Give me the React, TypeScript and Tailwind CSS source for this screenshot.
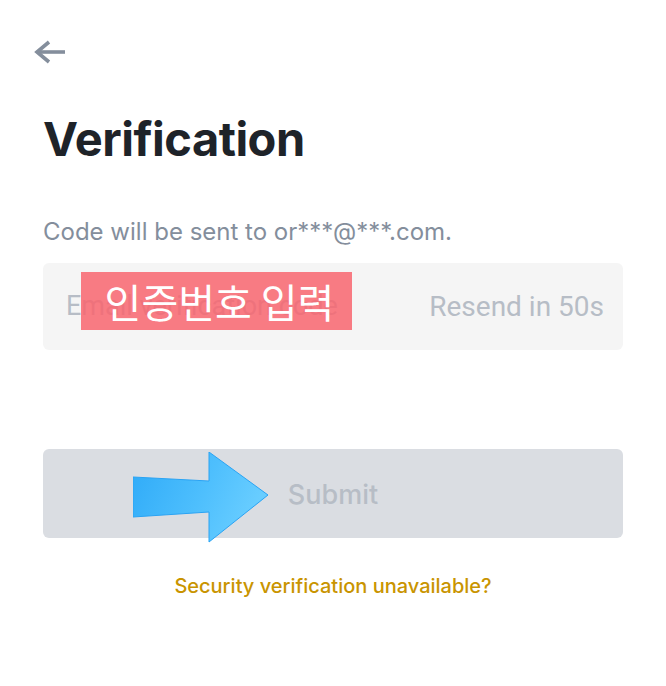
export default function App() {
  return (
    <div className="relative w-[666px] h-[686px] bg-white px-[43px] font-['Inter','Liberation_Sans',sans-serif] overflow-hidden">
      {/* back */}
      <button className="block mt-[40px] -ml-[9px] w-[32px] h-[24px]" aria-label="Back">
        <svg width="32" height="24" viewBox="0 0 32 24" fill="none">
          <path d="M31 12H3" stroke="#848e9c" strokeWidth="3.6" />
          <path d="M15 2L3 12L15 22" stroke="#848e9c" strokeWidth="3.6" strokeLinejoin="miter" />
        </svg>
      </button>

      <h1 className="mt-[51px] text-[47px] leading-[48px] font-bold text-[#1e2329] tracking-[-0.5px]">
        Verification
      </h1>

      <p className="mt-[57px] text-[24px] leading-[24px] text-[#848e9c]">
        Code will be sent to or***@***.com.
      </p>

      {/* code input */}
      <div className="relative mt-[19px] h-[87px] rounded-md bg-[#f5f5f5] flex items-center justify-between pl-[23px] pr-[19px] font-['Roboto','Liberation_Sans',sans-serif]">
        <span className="text-[27px] text-[#b7bdc6] whitespace-nowrap">Email verification code</span>
        <span className="text-[28px] text-[#b7bdc6] whitespace-nowrap">Resend in 50s</span>
        <div className="absolute left-[38px] top-[9px] w-[271px] h-[58px] bg-[#f8656e]/85 flex items-center justify-center">
          <span className="text-[40px] leading-none text-white font-['Noto_Sans_CJK_KR','Noto_Sans',sans-serif] ml-[6px]">
            인증번호 입력
          </span>
        </div>
      </div>

      {/* submit */}
      <div className="relative mt-[99px] h-[89px] rounded-md bg-[#dadde2] flex items-center justify-center">
        <span className="text-[27px] font-medium text-[#b7bdc6] mt-[3px]">Submit</span>
        <svg className="absolute left-[90px] top-[3px]" width="136" height="91" viewBox="0 0 136 91">
          <defs>
            <linearGradient id="arw" x1="0" y1="0" x2="1" y2="0.3">
              <stop offset="0" stopColor="#2eaaf8" />
              <stop offset="0.6" stopColor="#4ebffd" />
              <stop offset="1" stopColor="#68cdff" />
            </linearGradient>
          </defs>
          <polygon
            points="0,25 76,29 76,0 135,43 76,90 76,60 0,65"
            fill="url(#arw)"
            stroke="#2aa3f3"
            strokeWidth="1"
            strokeLinejoin="miter"
          />
        </svg>
      </div>

      <p className="mt-[36px] text-center text-[20px] leading-[24px] font-medium text-[#c99400]">
        Security verification unavailable?
      </p>
    </div>
  );
}
